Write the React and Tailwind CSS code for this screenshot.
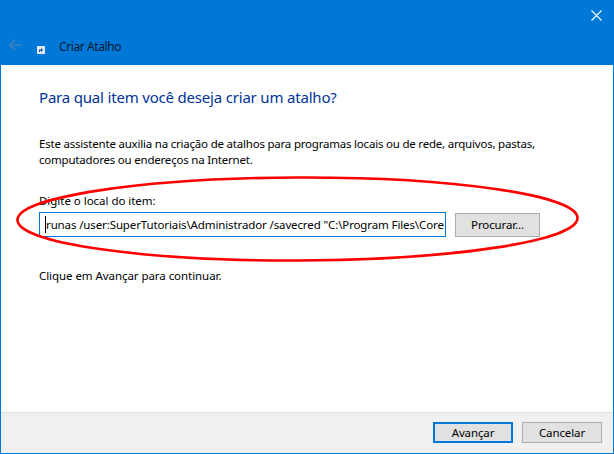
export default function App() {
  const font = { fontFamily: '"Noto Sans", sans-serif' };
  return (
    <div className="relative w-[614px] h-[454px] overflow-hidden bg-white border border-[#0078d7] flex flex-col text-[#000] font-['Noto_Sans',sans-serif]" style={font}>
      <div className="h-[64px] shrink-0 bg-[#0078d7] relative flex items-end pb-[10px]">
        <div className="w-[36px] pl-[8px] pb-[4px]">
          <svg width="13" height="12" viewBox="0 0 13 12" fill="none" stroke="#3a80bd" strokeWidth="1.6">
            <path d="M13 6H1.2M6 1L1 6l5 5" />
          </svg>
        </div>
        <div className="w-[8px] h-[8px] mb-[1px] bg-[#dfe9f2] mr-[14px] flex items-center justify-center">
          <svg width="6" height="6" viewBox="0 0 6 6"><path d="M1 5V2.5h2V1l2 2-2 2V3.8H2V5z" fill="#1d4f91" /></svg>
        </div>
        <span className="text-[12px] leading-[16px] tracking-[-0.4px] text-[#03182c]">Criar Atalho</span>
        <svg className="absolute right-[11px] top-[9px]" width="11" height="11" viewBox="0 0 11 11" stroke="#fff" strokeWidth="1.1"><path d="M.5.5l10 10M10.5.5l-10 10" /></svg>
      </div>
      <div className="flex-1 px-[38px] pt-[21px]">
        <h1 className="text-[15px] leading-[22px] text-[#003399] font-normal tracking-[-0.19px]">Para qual item você deseja criar um atalho?</h1>
        <p className="mt-[28px] text-[11.5px] leading-[16px] w-[530px] tracking-[-0.21px] text-[#000]">
          Este assistente auxilia na criação de atalhos para programas locais ou de rede, arquivos, pastas, computadores ou endereços na Internet.
        </p>
        <div className="mt-[25px] text-[11.5px] leading-[16px] tracking-[-0.03px] text-[#000]">Digite o local do item:</div>
        <div className="mt-[3px] flex items-start gap-[9px]">
          <div className="w-[407px] h-[25px] border border-[#0078d7] flex items-center pl-[5px] overflow-hidden whitespace-nowrap text-[11.5px] tracking-[-0.12px] text-[#000]">
            <span className="w-px h-[17px] bg-black shrink-0" />
            <span>runas /user:SuperTutoriais\Administrador /savecred "C:\Program Files\Core</span>
          </div>
          <button className="w-[85px] h-[24px] mt-[1px] bg-[#e1e1e1] border border-[#adadad] text-[11.5px] tracking-[-0.12px] text-[#000]">Procurar...</button>
        </div>
        <div className="mt-[31px] text-[11.5px] leading-[16px] tracking-[-0.06px] text-[#000]">Clique em Avançar para continuar.</div>
      </div>
      <div className="h-[41px] shrink-0 bg-[#f0f0f0] border-t border-[#dfdfdf] flex justify-end items-start pt-[9px] pr-[11px] gap-[9px]">
        <button className="w-[80px] h-[21px] bg-[#e1e1e1] border-2 border-[#0078d7] text-[11.5px] tracking-[-0.12px] text-[#000] leading-none">Avançar</button>
        <button className="w-[80px] h-[21px] bg-[#e1e1e1] border border-[#adadad] text-[11.5px] tracking-[-0.12px] text-[#000] leading-none">Cancelar</button>
      </div>
      <svg className="absolute left-[-1px] top-[-1px] pointer-events-none" width="614" height="454" viewBox="0 0 614 454" fill="none">
        <ellipse cx="297.5" cy="219" rx="280" ry="41.5" stroke="#ff0000" strokeWidth="2.6" transform="rotate(-0.2 297.5 219)" />
      </svg>
    </div>
  );
}
